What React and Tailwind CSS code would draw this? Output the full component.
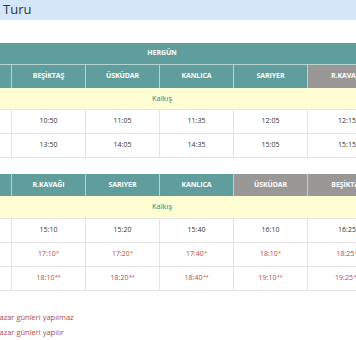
import React from 'react';

const top = {
  heads: [
    { name: '', gray: false },
    { name: 'BEŞİKTAŞ', gray: false },
    { name: 'ÜSKÜDAR', gray: false },
    { name: 'KANLICA', gray: false },
    { name: 'SARIYER', gray: false },
    { name: 'R.KAVAĞI', gray: true },
  ],
  rows: [
    ['', '10:50', '11:05', '11:35', '12:05', '12:15'],
    ['', '13:50', '14:05', '14:35', '15:05', '15:15'],
  ],
};

const back = {
  heads: [
    { name: '', gray: false },
    { name: 'R.KAVAĞI', gray: false },
    { name: 'SARIYER', gray: false },
    { name: 'KANLICA', gray: false },
    { name: 'ÜSKÜDAR', gray: true },
    { name: 'BEŞİKTAŞ', gray: true },
  ],
  rows: [
    ['', '15:10', '15:20', '15:40', '16:10', '16:25'],
    ['', '17:10*', '17:20*', '17:40*', '18:10*', '18:25*'],
    ['', '18:10**', '18:20**', '18:40**', '19:10**', '19:25**'],
  ],
};

const Time = ({ value }) => {
  const stars = value.replace(/[^*]/g, '');
  const time = value.replace(/\*/g, '');
  if (!stars) return <span className="text-[#333]">{time}</span>;
  return (
    <span className="text-[#b5474b]">
      {time}
      <sup className="text-[5px] ml-[0.5px] relative -top-[1px]">{stars}</sup>
    </span>
  );
};

const Timetable = ({ data, title, headH, kalkisH }) => (
  <div className="-ml-[62px] w-[448px] text-[7px]">
    {title && (
      <div className="h-[22px] bg-[#5f9e9c] border-b border-[#b4d4d2] flex items-center justify-center text-white font-bold tracking-[-0.1px]">
        {title}
      </div>
    )}
    <div className="grid grid-cols-[74px_74px_74px_74px_74px_78px]">
      {data.heads.map((h, i) => (
        <div
          key={i}
          className={`${headH} flex items-center justify-center text-white font-bold tracking-[-0.1px] ${i < 5 ? 'border-r border-[#b4d4d2]' : ''} ${h.gray ? 'bg-[#9a9797]' : 'bg-[#5f9e9c]'}`}
        >
          {h.name}
        </div>
      ))}
    </div>
    <div className={`${kalkisH} bg-[#fefed2] border-b border-[#e6e6e6] flex items-center justify-center text-[7.5px] text-[#3d7d7b]`}>
      Kalkış
    </div>
    {data.rows.map((row, r) => (
      <div key={r} className="grid grid-cols-[74px_74px_74px_74px_74px_78px] border-b border-[#e4e4e4]">
        {row.map((t, i) => (
          <div
            key={i}
            className={`h-[23px] flex items-center justify-center ${i < 5 ? 'border-r border-[#e4e4e4]' : ''}`}
          >
            <Time value={t} />
          </div>
        ))}
      </div>
    ))}
  </div>
);

export default function App() {
  return (
    <div className="w-[356px] h-[340px] overflow-hidden bg-white font-['Open_Sans',sans-serif]">
      <div className="h-[20px] bg-[#d4e6f9] border-b border-[#e2e8ee] flex items-center pl-[3px] text-[13px] text-[#333]">
        Turu
      </div>
      <div className="pt-[23px]">
        <Timetable data={top} title="HERGÜN" headH="h-[23px]" kalkisH="h-[22px]" />
      </div>
      <div className="pt-[16px]">
        <Timetable data={back} headH="h-[22px]" kalkisH="h-[23px]" />
      </div>
      <div className="pt-[21px] pb-[5px] border-b border-[#e6e6e6] text-[7.5px] text-[#b5474b] -ml-[5px] flex flex-col gap-[5px] leading-[10px]">
        <div>Pazar günleri yapılmaz</div>
        <div>Pazar günleri yapılır</div>
      </div>
    </div>
  );
}
